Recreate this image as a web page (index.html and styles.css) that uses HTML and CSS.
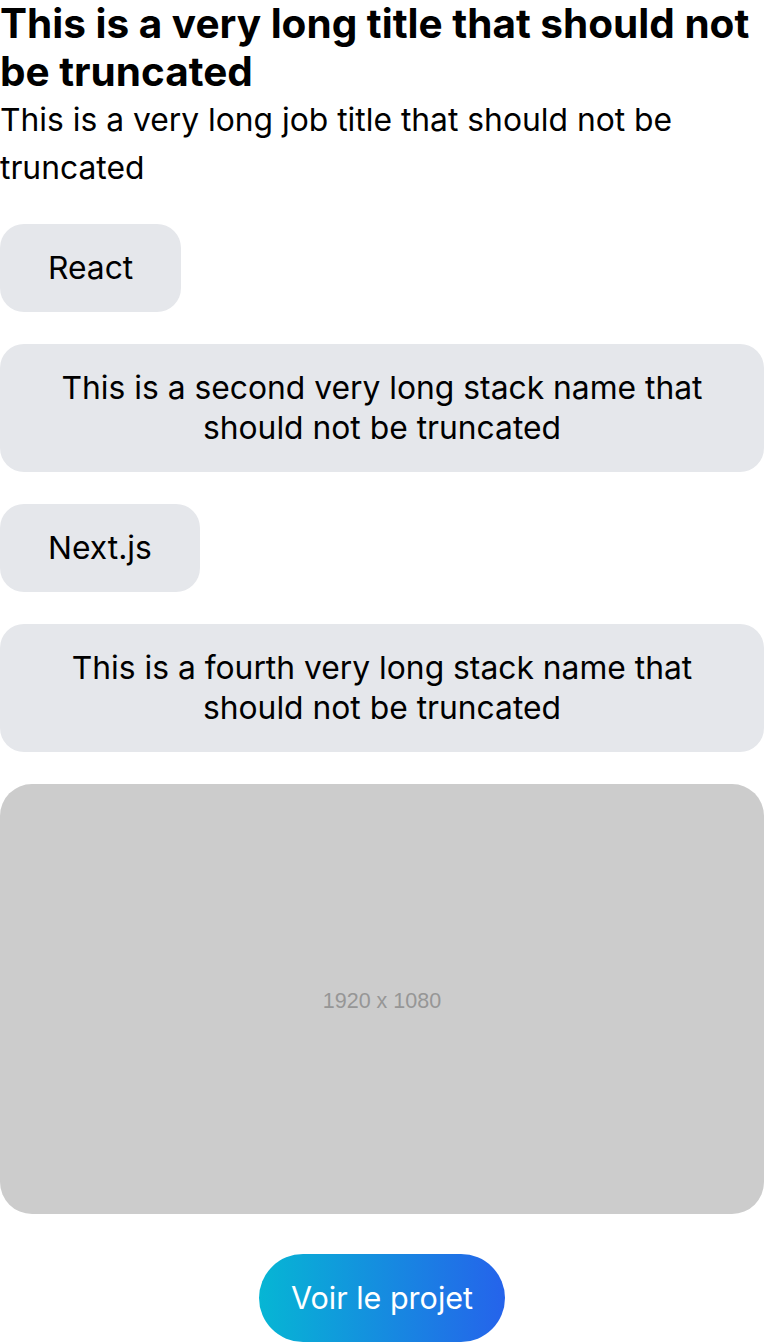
FILE: index.html
```html
<!DOCTYPE html>
<html lang="en">
<head>
<meta charset="utf-8">
<link rel="stylesheet" href="styles.css">
</head>
<body>
<main class="project">
  <header class="head">
    <h1 class="title">This is a very long title that should not be truncated</h1>
    <p class="job">This is a very long job title that should not be truncated</p>
  </header>
  <ul class="stack">
    <li class="chip">React</li>
    <li class="chip">This is a second very long stack name that should not be truncated</li>
    <li class="chip">Next.js</li>
    <li class="chip">This is a fourth very long stack name that should not be truncated</li>
  </ul>
  <div class="shot"><span class="shot-label">1920 x 1080</span></div>
  <div class="actions"><a class="cta" href="#">Voir le projet</a></div>
</main>
</body>
</html>
```
FILE: styles.css
```css
* { box-sizing: border-box; }
html, body { margin: 0; padding: 0; background: #fff; }
body { font-family: Inter, "Noto Sans", sans-serif; color: #000; }
.project { display: flex; flex-direction: column; gap: 32px; }
.head { display: flex; flex-direction: column; }
.title { margin: 0; font-size: 40.5px; line-height: 48px; font-weight: 700; }
.job { margin: 0; font-size: 31.8px; line-height: 48px; font-weight: 400; }
.stack { list-style: none; margin: 0; padding: 0; display: flex; flex-direction: column; align-items: flex-start; gap: 32px; }
.chip { background: #e5e7eb; border-radius: 24px; padding: 24px 48px; font-size: 31.8px; line-height: 40px; text-align: center; }
.shot { width: 100%; aspect-ratio: 1920 / 1080; background: #cccccc; border-radius: 32px; display: flex; align-items: center; justify-content: center; padding-top: 6px; }
.shot-label { font-family: "Liberation Sans", Arial, sans-serif; font-size: 21.5px; color: #969696; }
.actions { display: flex; justify-content: center; padding-top: 8px; }
.cta { display: inline-block; padding: 24px 32px; font-size: 30.5px; line-height: 40px; color: #fff; text-decoration: none; border-radius: 9999px; background: linear-gradient(to right, #06b6d4, #2563eb); }
```
